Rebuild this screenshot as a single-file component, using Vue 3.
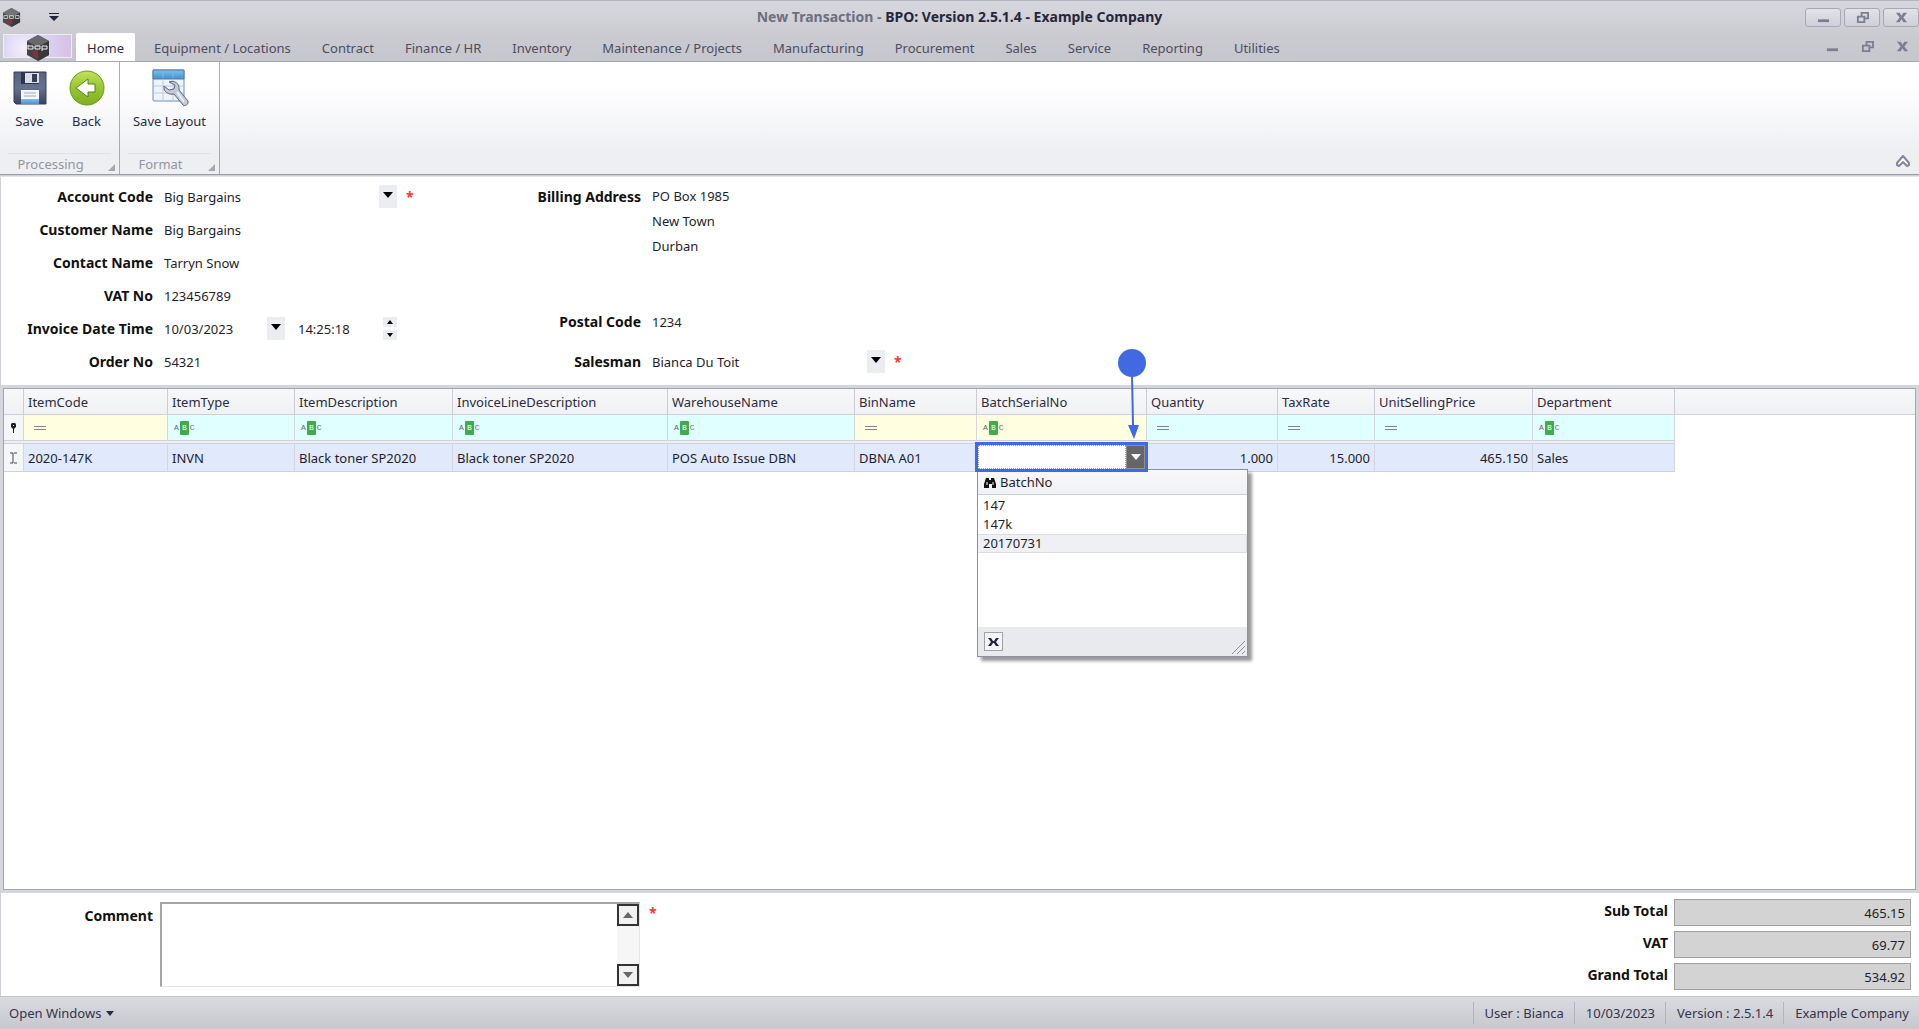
<script setup>
import { ref } from 'vue'

const tabs = [
  'Home', 'Equipment / Locations', 'Contract', 'Finance / HR', 'Inventory',
  'Maintenance / Projects', 'Manufacturing', 'Procurement', 'Sales', 'Service',
  'Reporting', 'Utilities',
]

const columns = [
  { name: 'ItemCode', width: 144, filter: 'eq', tone: 'yellow', value: '2020-147K' },
  { name: 'ItemType', width: 127, filter: 'abc', tone: 'cyan', value: 'INVN' },
  { name: 'ItemDescription', width: 158, filter: 'abc', tone: 'cyan', value: 'Black toner SP2020' },
  { name: 'InvoiceLineDescription', width: 215, filter: 'abc', tone: 'cyan', value: 'Black toner SP2020' },
  { name: 'WarehouseName', width: 187, filter: 'abc', tone: 'cyan', value: 'POS Auto Issue DBN' },
  { name: 'BinName', width: 122, filter: 'eq', tone: 'yellow', value: 'DBNA A01' },
  { name: 'BatchSerialNo', width: 170, filter: 'abc', tone: 'yellow', value: '', editor: true },
  { name: 'Quantity', width: 131, filter: 'eq', tone: 'cyan', value: '1.000', numeric: true },
  { name: 'TaxRate', width: 97, filter: 'eq', tone: 'cyan', value: '15.000', numeric: true },
  { name: 'UnitSellingPrice', width: 158, filter: 'eq', tone: 'cyan', value: '465.150', numeric: true },
  { name: 'Department', width: 142, filter: 'abc', tone: 'cyan', value: 'Sales' },
]

const batches = ['147', '147k', '20170731']
const totals = [
  { id: 'sub-total', label: 'Sub Total', value: '465.15' },
  { id: 'vat-total', label: 'VAT', value: '69.77' },
  { id: 'grand-total', label: 'Grand Total', value: '534.92' },
]
const status = ['User : Bianca', '10/03/2023', 'Version : 2.5.1.4', 'Example Company']

const address = ref(['PO Box 1985', 'New Town', 'Durban'].join('\n'))
const batch = ref('')
const comment = ref('')
</script>

<template>
  <div class="app">
    <header class="chrome">
      <div class="titlebar">
        <div class="quick">
          <svg class="logo-small" viewBox="0 0 20 22" aria-hidden="true">
            <path d="M10 1 19 6v10l-9 5-9-5V6z" fill="#4a4a4c" />
            <path d="M10 1 19 6l-9 5-9-5z" fill="#737375" />
            <path d="M10 11 19 6v10l-9 5z" fill="#39393b" />
            <path d="M2 9h4v3H2zM8 9h4v3H8zM14 9h4v3h-4z" fill="none" stroke="#c9c9cb" />
            <path d="M7 14h3v3H7zl-1 3M10 17l2 1" fill="none" stroke="#b32430" />
          </svg>
          <button class="bare quick-menu" type="button" aria-label="Customize quick access">
            <svg width="10" height="8" viewBox="0 0 10 8"><path d="M0 0h10v1H0zM0 3h10L5 8z" fill="#23233a" /></svg>
          </button>
        </div>
        <h1 class="title"><span>New Transaction - </span>BPO: Version 2.5.1.4 - Example Company</h1>
        <div class="window-buttons">
          <button type="button" aria-label="Minimize"><svg viewBox="0 0 14 14"><path d="M1 9h12v3H1z" fill="#7d7e90" /></svg></button>
          <button type="button" aria-label="Restore"><svg viewBox="0 0 14 14"><path d="M6 5V2h7v6h-3M2 6h7v6H2z" fill="none" stroke="#7d7e90" stroke-width="2" /></svg></button>
          <button type="button" aria-label="Close"><svg viewBox="0 0 14 14"><path d="M1 2h4l2 3 2-3h4L9 7l4 5H9L7 9l-2 3H1l4-5z" fill="#7d7e90" /></svg></button>
        </div>
      </div>
      <nav class="tabbar">
        <button class="app-button" type="button" aria-label="Application menu">
          <svg width="24" height="26" viewBox="0 0 24 26">
            <path d="M12 0 23 6v14l-11 6L1 20V6z" fill="#444446" />
            <path d="M12 0 23 6l-11 6L1 6z" fill="#69696b" />
            <path d="M12 12 23 6v14l-11 6z" fill="#38383a" />
            <path d="M2 10v4h5v-3H2M9 14v-3h5v3zM16 16v-5h5v3h-5" fill="none" stroke="#f2f2f4" stroke-width="1" />
            <path d="M8 17h3v4H8zM11 21l2 2" fill="none" stroke="#c01f2c" />
          </svg>
        </button>
        <button
          v-for="(tab, i) in tabs"
          :key="tab"
          type="button"
          class="tab"
          :class="{ active: i === 0 }"
        >{{ tab }}</button>
        <div class="child-buttons">
          <button class="bare" type="button" aria-label="Minimize document"><svg viewBox="0 0 14 14"><path d="M1 9h12v3H1z" fill="#7d7e90" /></svg></button>
          <button class="bare" type="button" aria-label="Restore document"><svg viewBox="0 0 14 14"><path d="M6 5V2h7v6h-3M2 6h7v6H2z" fill="none" stroke="#7d7e90" stroke-width="2" /></svg></button>
          <button class="bare" type="button" aria-label="Close document"><svg viewBox="0 0 14 14"><path d="M1 2h4l2 3 2-3h4L9 7l4 5H9L7 9l-2 3H1l4-5z" fill="#7d7e90" /></svg></button>
        </div>
      </nav>
    </header>

    <section class="ribbon">
      <div class="group processing">
        <div class="tools">
          <button class="bare tool" type="button">
            <svg width="36" height="38" viewBox="0 0 36 38">
              <defs>
                <linearGradient id="disk" x1="0" y1="0" x2="0" y2="1"><stop offset="0" stop-color="#5a6480" /><stop offset=".5" stop-color="#66718d" /><stop offset="1" stop-color="#3c4560" /></linearGradient>
                <linearGradient id="sky" x1="0" y1="0" x2="0" y2="1"><stop offset="0" stop-color="#7cc0ea" /><stop offset="1" stop-color="#4792cc" /></linearGradient>
              </defs>
              <path d="M2 3h32v32H4l-2-2z" fill="url(#disk)" stroke="#37405a" />
              <path d="M9 3h18v12H9z" fill="#2d3550" />
              <path d="M13 4h14v10H13z" fill="#d8dde6" />
              <path d="M20 5h5v8h-5z" fill="#343d58" />
              <path d="M9 21h18v9H9z" fill="#f5f7fa" />
              <path d="M9 30h18v5H9z" fill="url(#sky)" />
              <path d="M12 24h12M12 27h12" stroke="#9aa7c4" />
            </svg>
            Save
          </button>
          <button class="bare tool" type="button">
            <svg width="36" height="38" viewBox="0 0 36 38">
              <defs>
                <linearGradient id="leaf" x1="0" y1="0" x2="0" y2="1"><stop offset="0" stop-color="#c4e25c" /><stop offset=".5" stop-color="#97c52f" /><stop offset="1" stop-color="#7fb022" /></linearGradient>
              </defs>
              <circle cx="18" cy="19" r="17" fill="url(#leaf)" stroke="#6b9722" />
              <path d="M7 19 19 10v5h7v8h-7v5z" fill="#fff" stroke="#55801c" stroke-width="1" />
            </svg>
            Back
          </button>
        </div>
        <div class="caption">Processing<svg width="7" height="7" viewBox="0 0 7 7"><path d="M7 0v7H0z" fill="#a6a7ae" /></svg></div>
      </div>
      <div class="group format">
        <div class="tools">
          <button class="bare tool" type="button">
            <svg width="38" height="38" viewBox="0 0 38 38">
              <rect x="2" y="1" width="31" height="31" rx="1" fill="#eef3fa" stroke="#7289b4" />
              <path d="M2 1h31v9H2z" fill="url(#sky)" stroke="#4c7cb4" />
              <path d="M3 17h29M3 24h29M12 10v22M22 10v22" stroke="#bdcbe2" />
              <path d="M12 3v6M22 3v6" stroke="#7db4e0" />
              <path d="M18 13c5-2 11 1 10 8l9 11c1 3-3 6-5 4l-9-11c-5 1-11-2-10-8l5 4 5-1 1-4z" fill="#c3cbd9" stroke="#5b6783" stroke-width="1" stroke-linejoin="round" />
              <path d="m26 23 7 10" stroke="#edf1f6" stroke-width="2" />
            </svg>
            Save Layout
          </button>
        </div>
        <div class="caption">Format<svg width="7" height="7" viewBox="0 0 7 7"><path d="M7 0v7H0z" fill="#a6a7ae" /></svg></div>
      </div>
      <button class="bare collapse" type="button" aria-label="Collapse ribbon">
        <svg width="16" height="14" viewBox="0 0 16 14"><path d="M8 2 14 9v2l-2 1-4-4-4 4-2-1V9z" fill="#fff" stroke="#85869a" stroke-width="2" stroke-linejoin="round" /></svg>
      </button>
    </section>

    <form class="details" @submit.prevent>
      <div class="fields">
        <div class="field">
          <label for="account">Account Code</label>
          <div class="combo wide">
            <select id="account"><option>Big Bargains</option></select>
            <svg class="drop" viewBox="0 0 18 23"><path d="M4 7h10l-5 6z" /></svg>
          </div>
          <span class="required">*</span>
        </div>
        <div class="field">
          <label for="customer">Customer Name</label>
          <input id="customer" class="wide" value="Big Bargains">
        </div>
        <div class="field">
          <label for="contact">Contact Name</label>
          <input id="contact" class="wide" value="Tarryn Snow">
        </div>
        <div class="field">
          <label for="vat">VAT No</label>
          <input id="vat" class="wide" value="123456789">
        </div>
        <div class="field">
          <label for="date">Invoice Date Time</label>
          <div class="combo date">
            <select id="date"><option>10/03/2023</option></select>
            <svg class="drop" viewBox="0 0 18 23"><path d="M4 7h10l-5 6z" /></svg>
          </div>
          <div class="time">
            <input value="14:25:18" aria-label="Invoice time">
            <div class="spinner">
              <button type="button" aria-label="Later"><svg width="6" height="4" viewBox="0 0 6 4"><path d="M0 4h6L3 0z" /></svg></button>
              <button type="button" aria-label="Earlier"><svg width="6" height="4" viewBox="0 0 6 4"><path d="M0 0h6L3 4z" /></svg></button>
            </div>
          </div>
        </div>
        <div class="field">
          <label for="order">Order No</label>
          <input id="order" class="wide" value="54321">
        </div>
      </div>
      <div class="fields billing">
        <div class="field address">
          <label for="address">Billing Address</label>
          <textarea id="address" v-model="address" class="wide" rows="3"></textarea>
        </div>
        <div class="field">
          <label for="postal">Postal Code</label>
          <input id="postal" class="wide" value="1234">
        </div>
        <div class="field last">
          <label for="salesman">Salesman</label>
          <div class="combo wide">
            <select id="salesman"><option>Bianca Du Toit</option></select>
            <svg class="drop" viewBox="0 0 18 23"><path d="M4 7h10l-5 6z" /></svg>
          </div>
          <span class="required">*</span>
        </div>
      </div>
    </form>

    <main class="grid-frame">
      <table class="grid">
        <colgroup>
          <col class="marker">
          <col v-for="c in columns" :key="c.name" :style="{ width: c.width + 'px' }">
          <col>
        </colgroup>
        <thead>
          <tr class="heads">
            <th></th>
            <th v-for="c in columns" :key="c.name" scope="col">{{ c.name }}</th>
            <th class="rest"></th>
          </tr>
        </thead>
        <tbody>
          <tr class="filters">
            <td class="mark">
              <svg width="7" height="10" viewBox="0 0 7 10"><path d="M2 0h3l1 1v3L4 6v4H3V6L1 4V1z" fill="#20202a" /><path d="M3 2h1v1H3z" fill="#fff" /></svg>
            </td>
            <td v-for="c in columns" :key="c.name" :class="c.tone">
              <span v-if="c.filter === 'abc'" class="abc"><i>A</i><b>B</b><i>C</i></span>
              <svg v-else class="eq" width="12" height="6" viewBox="0 0 12 6"><path d="M0 1h12M0 4h12" stroke="#7f848c" stroke-width="1" transform="translate(0 .5)" /></svg>
            </td>
            <td class="rest"></td>
          </tr>
          <tr class="divider"><td :colspan="columns.length + 1"></td><td class="rest"></td></tr>
          <tr class="record">
            <td class="mark">
              <svg width="7" height="12" viewBox="0 0 7 12"><path d="M0 1h3M4 1h3M0 11h3M4 11h3M3 1v10" fill="none" stroke="#454550" /></svg>
            </td>
            <td v-for="c in columns" :key="c.name" :class="{ numeric: c.numeric, editing: c.editor }">
              <template v-if="c.editor">
                <div class="editor">
                  <input v-model="batch" aria-label="BatchSerialNo">
                  <button type="button" aria-label="Open batch list"><svg width="10" height="6" viewBox="0 0 10 6"><path d="M0 0h10L5 6z" fill="#fff" /></svg></button>
                </div>
                <svg class="callout" width="28" height="92" viewBox="0 0 28 92" aria-hidden="true">
                  <circle cx="14" cy="14" r="14" />
                  <path d="M13 26h2l1 50h5l-5 14-6-14h4z" />
                </svg>
                <div class="popup">
                  <div class="popup-head">
                    <svg width="12" height="11" viewBox="0 0 12 11"><path d="M2 1h3v2h2V1h3l2 6v4H8V7H5v4H0V7z" fill="#111" /><path d="M3 5v3M9 5v3" stroke="#fff" /></svg>
                    BatchNo
                  </div>
                  <ul>
                    <li v-for="(b, i) in batches" :key="b" :class="{ hot: i === 2 }" @click="batch = b">{{ b }}</li>
                  </ul>
                  <div class="popup-foot">
                    <button type="button" aria-label="Clear"><svg width="11" height="8" viewBox="0 0 11 8"><path d="M0 0h3l2 3h1l2-3h3L8 4l3 4H8L6 5H5L3 8H0l3-4z" fill="#23233a" /></svg></button>
                    <svg class="grip" width="13" height="13" viewBox="0 0 13 13"><path d="M0 13 13 0M5 13l8-8M10 13l3-3" stroke="#8e8f99" /></svg>
                  </div>
                </div>
              </template>
              <template v-else>{{ c.value }}</template>
            </td>
            <td class="rest"></td>
          </tr>
        </tbody>
      </table>
    </main>

    <section class="bottom">
      <label class="comment-label" for="comment">Comment</label>
      <div class="comment">
        <textarea id="comment" v-model="comment"></textarea>
        <div class="scroll">
          <button type="button" aria-label="Scroll up"><svg width="10" height="6" viewBox="0 0 10 6"><path d="M0 6h10L5 0z" /></svg></button>
          <button type="button" aria-label="Scroll down"><svg width="10" height="6" viewBox="0 0 10 6"><path d="M0 0h10L5 6z" /></svg></button>
        </div>
      </div>
      <span class="required">*</span>
      <div class="totals">
        <div v-for="t in totals" :key="t.id" class="total">
          <label :for="t.id">{{ t.label }}</label>
          <input :id="t.id" :value="t.value" readonly>
        </div>
      </div>
    </section>

    <footer class="status">
      <button class="bare open-windows" type="button">Open Windows
        <svg width="8" height="5" viewBox="0 0 8 5"><path d="M0 0h8L4 5z" fill="#2b2b40" /></svg>
      </button>
      <div class="cells"><span v-for="s in status" :key="s">{{ s }}</span></div>
    </footer>
  </div>
</template>

<style>
body { background: #fff; }
</style>

<style scoped>
* { box-sizing: border-box; }
.app {
  min-height: 100vh;
  display: flex;
  flex-direction: column;
  font: 13px/20px "Noto Sans", "Open Sans", sans-serif;
  color: #1e1e2d;
}
button, input, select, textarea { font: inherit; color: inherit; margin: 0; border-radius: 0; }
input, select, textarea { appearance: none; border: 0; background: transparent; outline: none; min-width: 0; }
.bare { border: 0; background: none; padding: 0; }
svg { display: block; flex: none; }

.chrome { background: linear-gradient(#d7d8de, #cacad0 36px, #c6c6ce); border-top: 1px solid #b4b5bd; border-bottom: 1px solid #a5a8b3; }
.titlebar { display: grid; grid-template-columns: 1fr auto 1fr; height: 32px; align-items: center; }
.quick { display: flex; align-items: center; gap: 28px; padding-left: 2px; }
.logo-small { width: 19px; height: 21px; }
.title { margin: 0; font-size: 14px; font-weight: 700; line-height: 20px; color: #26263a; }
.title span { color: #6d6e80; white-space: pre; }
.window-buttons { display: flex; justify-content: flex-end; gap: 3px; }
.window-buttons button { width: 36px; height: 19px; display: grid; place-items: center; padding: 0; border: 1px solid #a8a9b4; border-radius: 3px; background: linear-gradient(#e2e3e8, #cfd0d7); }
.window-buttons svg, .child-buttons svg { width: 13px; height: 13px; }
.tabbar { display: flex; height: 28px; align-items: stretch; }
.app-button { width: 69px; height: 24px; margin: 1px 4px 0 3px; padding: 0; display: grid; place-items: center; border: 1px solid #f0ecf6; background: radial-gradient(circle at 30% 60%, #f4effb, #d9d3f1 50%, #d8bfe4); }
.tab { border: 0; background: none; padding: 2px 15px 0 16px; color: #4d4d62; white-space: nowrap; }
.tab.active { background: #fff; margin-right: 3px; padding: 2px 11px 0; color: #2b2b44; border-radius: 2px 2px 0 0; }
.child-buttons { display: flex; gap: 22px; margin-left: auto; padding: 7px 10px 0 0; align-items: flex-start; }

.ribbon { display: flex; height: 115px; background: linear-gradient(#fff 20%, #eeeff3 80%); border-bottom: 1px solid #e4e5ea; box-shadow: inset 0 -1px #d0d1d8, inset 0 -2px #9a9ba8; padding-bottom: 2px; }
.group { display: flex; flex-direction: column; border-right: 1px solid #a9aab4; }
.processing { width: 120px; }
.format { width: 100px; }
.tools { display: flex; justify-content: center; flex: 1; padding-top: 7px; }
.processing .tools { justify-content: flex-start; padding-left: 1px; }
.tool { display: flex; flex-direction: column; align-items: center; justify-content: flex-start; gap: 4px; width: 57px; color: #2b2b44; white-space: nowrap; }
.format .tool { width: 96px; }
.caption { display: flex; justify-content: center; position: relative; height: 21px; margin: 0 8px; border-top: 1px solid #e2e3e7; color: #94959f; padding-right: 18px; }
.caption svg { position: absolute; right: -4px; bottom: 3px; }
.collapse { margin: auto 8px 6px auto; }

.details { display: flex; padding: 3px 0 7px; border-left: 1px solid #d0d1d6; }
.fields { display: flex; flex-direction: column; width: 488px; }
.field { display: flex; align-items: center; height: 33px; }
label { font-size: 14px; font-weight: 700; color: #111; text-align: right; white-space: nowrap; }
.field label { width: 152px; margin-right: 7px; }
.wide { width: 237px; }
.field input, select { padding: 0 0 0 4px; height: 23px; }
.combo { position: relative; display: flex; }
.combo select { flex: 1; }
.date { width: 125px; }
.drop { position: absolute; right: 0; top: 0; width: 18px; height: 23px; background: #ecedf1; pointer-events: none; }
.time { display: flex; align-items: center; width: 112px; padding-left: 9px; }
.time input { flex: 1; }
.spinner { display: flex; flex-direction: column; gap: 3px; }
.spinner button { width: 14px; height: 10px; padding: 0; border: 0; background: #ecedf1; display: grid; place-items: center; }
.required { color: #f33; font-size: 14px; font-weight: 700; margin-left: 9px; height: 20px; }
.address { height: 75px; margin-top: 4px; align-items: flex-start; }
.address textarea { height: 75px; padding: 0 0 0 4px; line-height: 25px; resize: none; overflow: hidden; }
.address label { line-height: 25px; }
.billing { width: 560px; }
.address + .field { margin-top: 46px; }
.billing .last { margin-top: 7px; }

.grid-frame { flex: 1; border: solid #d5d6dc; border-width: 3px 3px 4px; outline: 1px solid #a4a5b1; outline-offset: -4px; }
.grid { width: 100%; table-layout: fixed; border-collapse: separate; border-spacing: 0; }
.marker { width: 21px; }
.grid th, .grid td { padding: 0 0 0 4px; text-align: left; font-weight: 400; white-space: nowrap; border-right: 1px solid #d5d6e0; border-bottom: 1px solid #cfd0d8; }
.heads th { height: 27px; background: linear-gradient(#f8f8fa, #f0f1f4); border-top: 1px solid #a4a5b1; border-right-color: #cbccd6; color: #2b2b44; }
.grid .rest { border-right: 0; }
tbody .rest { border-bottom: 0; }
.filters td { height: 26px; }
.yellow { background: #fffee0; }
.cyan { background: #e0ffff; }
.grid .mark { background: #f5f6f8; padding: 0 0 0 7px; }
.divider td:first-child { height: 3px; background: #eeeff3; }
.record td { height: 28px; background: #e1e9fd; }
.record .rest { background: none; }
.record .numeric { text-align: right; padding-right: 4px; }
.eq { margin-left: 6px; }
.abc { display: flex; align-items: center; gap: 1px; padding-left: 2px; font: 8px/14px "Liberation Mono", monospace; color: #5f6a70; }
.abc i { font-style: normal; }
.abc b { width: 9px; background: #3fab4a; color: #fff; text-align: center; border-radius: 1px; font-weight: 400; }

.record .editing { position: relative; padding: 0; }
.editor { position: absolute; inset: -2px -2px -1px -2px; z-index: 2; display: flex; border: 3px solid #4169e1; background: #fff; }
.editor input { flex: 1; border: 1px dotted #999; }
.editor button { width: 19px; padding: 0; border: 1px solid #8f8f8f; background: #666; display: grid; place-items: center; }
.callout { position: absolute; top: -95px; right: 0; fill: #4169e1; pointer-events: none; z-index: 2; }
.popup { position: absolute; top: 100%; left: 0; margin-top: -2px; width: 271px; border: 1px solid #8f909c; background: #fff; box-shadow: 4px 4px 3px rgba(0, 0, 0, .4); z-index: 1; }
.popup-head { display: flex; align-items: center; gap: 4px; height: 25px; padding-left: 6px; background: linear-gradient(#f8f8fa, #f0f1f4); border-bottom: 1px solid #cbccd6; }
.popup ul { list-style: none; margin: 0; padding: 1px 0 0; height: 132px; }
.popup li { height: 19px; line-height: 17px; padding-left: 5px; border: 1px solid transparent; border-left: 0; }
.popup .hot { background: #eef0f3; border-color: #dcdee2; }
.popup-foot { display: flex; justify-content: space-between; align-items: center; height: 29px; padding: 0 2px 0 6px; background: #e9eaee; }
.popup-foot button { width: 19px; height: 19px; padding: 0; border: 1px solid #a2a2a6; background: #f4f4f6; display: grid; place-items: center; }
.grip { align-self: flex-end; margin-bottom: 2px; }

.bottom { display: flex; align-items: flex-start; height: 103px; padding-top: 6px; border-left: 1px solid #d0d1d6; }
.comment-label { width: 152px; margin: 7px 7px 0 0; }
.comment { display: flex; width: 480px; height: 85px; margin-top: 3px; border: 1px solid #e3e3e3; border-top: 2px solid #a5a5a5; border-left: 2px solid #a5a5a5; }
.comment textarea { flex: 1; resize: none; padding: 2px 4px; }
.scroll { width: 22px; display: flex; flex-direction: column; justify-content: space-between; background: #f6f6f6; }
.scroll button { width: 22px; height: 22px; padding: 0; border: 2px solid #333; background: #f1f1f1; display: grid; place-items: center; fill: #666; }
.bottom .required { margin-top: 4px; }
.totals { margin-left: auto; padding-right: 8px; display: flex; flex-direction: column; gap: 5px; }
.total { display: flex; }
.total label { width: 100px; margin-right: 6px; line-height: 24px; }
.total input { width: 237px; height: 27px; border: 1px solid #9fa0a4; background: #d3d3d3; text-align: right; padding: 0 5px; }

.status { display: flex; justify-content: space-between; align-items: center; height: 33px; padding: 0 0 0 9px; border-top: 1px solid #c3c4ca; background: linear-gradient(#dadbe0, #c7c8ce); color: #34344a; }
.open-windows { display: flex; align-items: center; gap: 5px; }
.cells { display: flex; }
.cells span { padding: 0 10px 0 11px; border-left: 1px solid #b2b3bb; line-height: 22px; }
</style>
